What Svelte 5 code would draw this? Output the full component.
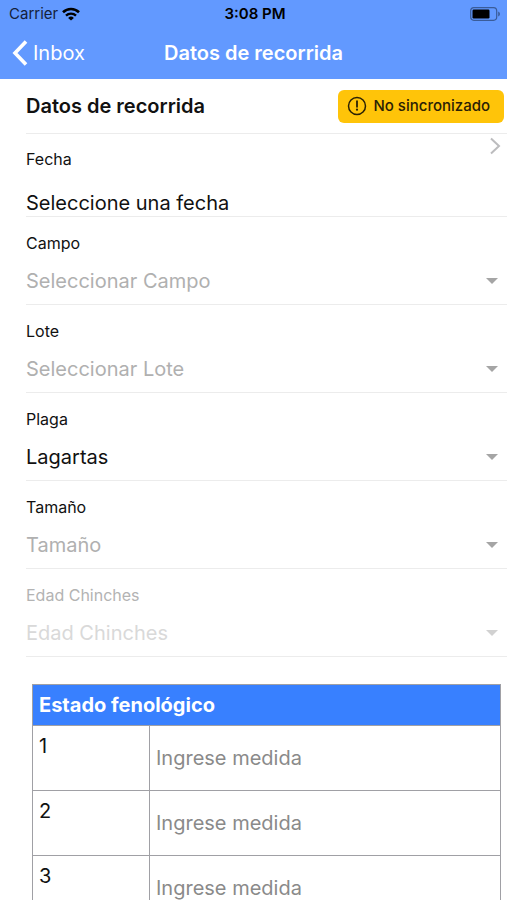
<script>
	let plaga = $state('Lagartas');

	const fields = [
		{ id: 'campo', label: 'Campo', placeholder: 'Seleccionar Campo' },
		{ id: 'lote', label: 'Lote', placeholder: 'Seleccionar Lote' },
		{ id: 'plaga', label: 'Plaga', value: 'Lagartas' },
		{ id: 'tamano', label: 'Tamaño', placeholder: 'Tamaño' },
		{ id: 'edad', label: 'Edad Chinches', placeholder: 'Edad Chinches', disabled: true }
	];

	const rows = [1, 2, 3];
</script>

<div class="screen">
	<header>
		<div class="status_bar">
			<div class="carrier">
				<span>Carrier</span>
				<svg width="18" height="14" viewBox="0 0 18 14" aria-hidden="true">
					<path d="M1 5.2a11.5 11.5 0 0 1 16 0" fill="none" stroke="currentColor" stroke-width="2.6" />
					<path d="M4 8.6a7.2 7.2 0 0 1 10 0" fill="none" stroke="currentColor" stroke-width="2.4" />
					<path d="M9 13.6 6.1 10.9a4.1 4.1 0 0 1 5.8 0z" fill="currentColor" />
				</svg>
			</div>
			<span class="time">3:08 PM</span>
			<svg class="battery" width="31" height="14" viewBox="0 0 31 14" aria-hidden="true">
				<rect x="0.7" y="0.7" width="26" height="12.6" rx="3.2" fill="none" stroke="#3a5c99" stroke-width="1.2" />
				<rect x="2.5" y="2.5" width="17" height="9" rx="1.2" fill="#000" />
				<path d="M28.2 4.5c2.3.8 2.3 4.2 0 5z" fill="#3a5c99" />
			</svg>
		</div>
		<nav>
			<button type="button" class="back">
				<svg width="16" height="26" viewBox="0 0 16 26" aria-hidden="true">
					<path d="M14 1.500 3 13l11 11.500" fill="none" stroke="currentColor" stroke-width="3.600" />
				</svg>
				Inbox
			</button>
			<h1>Datos de recorrida</h1>
		</nav>
	</header>

	<main>
		<div class="heading">
			<h2>Datos de recorrida</h2>
			<span class="badge">
				<svg width="20" height="20" viewBox="0 0 20 20" aria-hidden="true">
					<circle cx="10" cy="10" r="8.500" fill="none" stroke="currentColor" stroke-width="1.500" />
					<path d="M10 5.200v5.600" stroke="currentColor" stroke-width="1.800" stroke-linecap="round" />
					<circle cx="10" cy="13.700" r="1.100" fill="currentColor" />
				</svg>
				No sincronizado
			</span>
		</div>

		<button type="button" class="date">
			<span class="date_text">
				<span class="label">Fecha</span>
				<span class="date_value">Seleccione una fecha</span>
			</span>
			<svg width="12" height="18" viewBox="0 0 12 18" aria-hidden="true">
				<path d="m2 1.500 8 7.500-8 7.500" fill="none" stroke="#bcbcbe" stroke-width="2" />
			</svg>
		</button>

		{#each fields as field (field.id)}
			<div class="field" class:disabled={field.disabled}>
				<label class="label" for={field.id}>{field.label}</label>
				<div class="select_row">
					{#if field.value}
						<select id={field.id} bind:value={plaga}>
							<option>{field.value}</option>
						</select>
					{:else}
						<select id={field.id} class="empty" disabled={field.disabled}>
							<option value="">{field.placeholder}</option>
						</select>
					{/if}
					<svg width="12" height="6" viewBox="0 0 12 6" aria-hidden="true">
						<path d="M0 0h12L6 6z" fill="#a5a5a5" />
					</svg>
				</div>
			</div>
		{/each}

		<table>
			<colgroup>
				<col class="number_col" />
				<col />
			</colgroup>
			<thead>
				<tr>
					<th colspan="2">Estado fenológico</th>
				</tr>
			</thead>
			<tbody>
				{#each rows as row (row)}
					<tr>
						<td class="number">{row}</td>
						<td>
							<input type="text" inputmode="decimal" placeholder="Ingrese medida" aria-label="Medida {row}" />
						</td>
					</tr>
				{/each}
			</tbody>
		</table>
	</main>
</div>

<style>
	:global(body) {
		margin: 0;
		background: #fff;
	}

	.screen {
		display: flex;
		flex-direction: column;
		height: 100vh;
		color: #111;
		background: #fff;
		font-family: Inter, 'Liberation Sans', sans-serif;
		font-size: 20px;
		line-height: 24px;
	}

	button,
	select,
	input {
		margin: 0;
		padding: 0;
		border: 0;
		border-radius: 0;
		background: none;
		color: inherit;
		font: inherit;
	}

	svg {
		display: block;
		flex: none;
	}

	header {
		flex: none;
		background: #6299ff;
	}

	.status_bar {
		display: grid;
		grid-template-columns: 1fr auto 1fr;
		align-items: center;
		height: 27px;
		padding: 0 6px 0 9px;
		color: #000;
		font-size: 15px;
	}

	.carrier {
		display: flex;
		align-items: center;
		gap: 4px;
		color: #14213b;
	}

	.carrier svg {
		color: #000;
	}

	.time {
		font-weight: 600;
	}

	.battery {
		justify-self: end;
	}

	nav {
		display: grid;
		grid-template-columns: 1fr auto 1fr;
		align-items: center;
		height: 52px;
		padding: 0 12px;
		color: #fff;
	}

	.back {
		display: flex;
		align-items: center;
		gap: 5px;
		justify-self: start;
	}

	h1,
	h2 {
		margin: 0;
		font-size: 20px;
		font-weight: 600;
	}

	main {
		flex: 1;
		min-height: 0;
		overflow-y: auto;
		scrollbar-width: none;
	}

	.heading {
		display: flex;
		align-items: center;
		justify-content: space-between;
		height: 54px;
		margin-left: 26px;
		padding-right: 3px;
		border-bottom: 1px solid #ececec;
	}

	.badge {
		display: flex;
		align-items: center;
		gap: 6px;
		height: 33px;
		padding: 0 14px 0 9px;
		border-radius: 6px;
		background: #ffc409;
		color: #2a2105;
		font-size: 15px;
		font-weight: 500;
	}

	.date {
		display: flex;
		align-items: flex-start;
		justify-content: space-between;
		box-sizing: border-box;
		width: calc(100% - 26px);
		height: 83px;
		margin-left: 26px;
		padding: 3px 6px 0 0;
		border-bottom: 1px solid #ececec;
		text-align: left;
	}

	.date_text {
		display: flex;
		flex-direction: column;
		gap: 20px;
		padding-top: 10px;
	}

	.label {
		font-size: 16px;
	}

	.field {
		display: flex;
		flex-direction: column;
		gap: 13px;
		margin-left: 26px;
		padding: 14px 0 10px;
		border-bottom: 1px solid #ececec;
	}

	.select_row {
		display: flex;
		align-items: center;
		padding-right: 9px;
	}

	select {
		flex: 1;
		min-width: 0;
		height: 26px;
		appearance: none;
		opacity: 1;
	}

	.empty {
		color: #b0b0b0;
	}

	.disabled .label {
		color: #b3b3b3;
	}

	.disabled .empty {
		color: #d9d9d9;
	}

	.disabled svg {
		opacity: 0.5;
	}

	table {
		width: calc(100% - 38px);
		margin: 27px 6px 26px 32px;
		border-collapse: collapse;
		table-layout: fixed;
	}

	.number_col {
		width: 25%;
	}

	th,
	td {
		box-sizing: border-box;
		padding: 8px 6px;
		border: 1px solid #a0a0a5;
	}

	th {
		height: 40px;
		background: #3880ff;
		color: #fff;
		font-weight: 700;
		text-align: left;
	}

	td {
		height: 65px;
	}

	.number {
		vertical-align: top;
	}

	input {
		display: block;
		width: 100%;
	}

	input::placeholder {
		color: #8a8a8a;
		opacity: 1;
	}
</style>
